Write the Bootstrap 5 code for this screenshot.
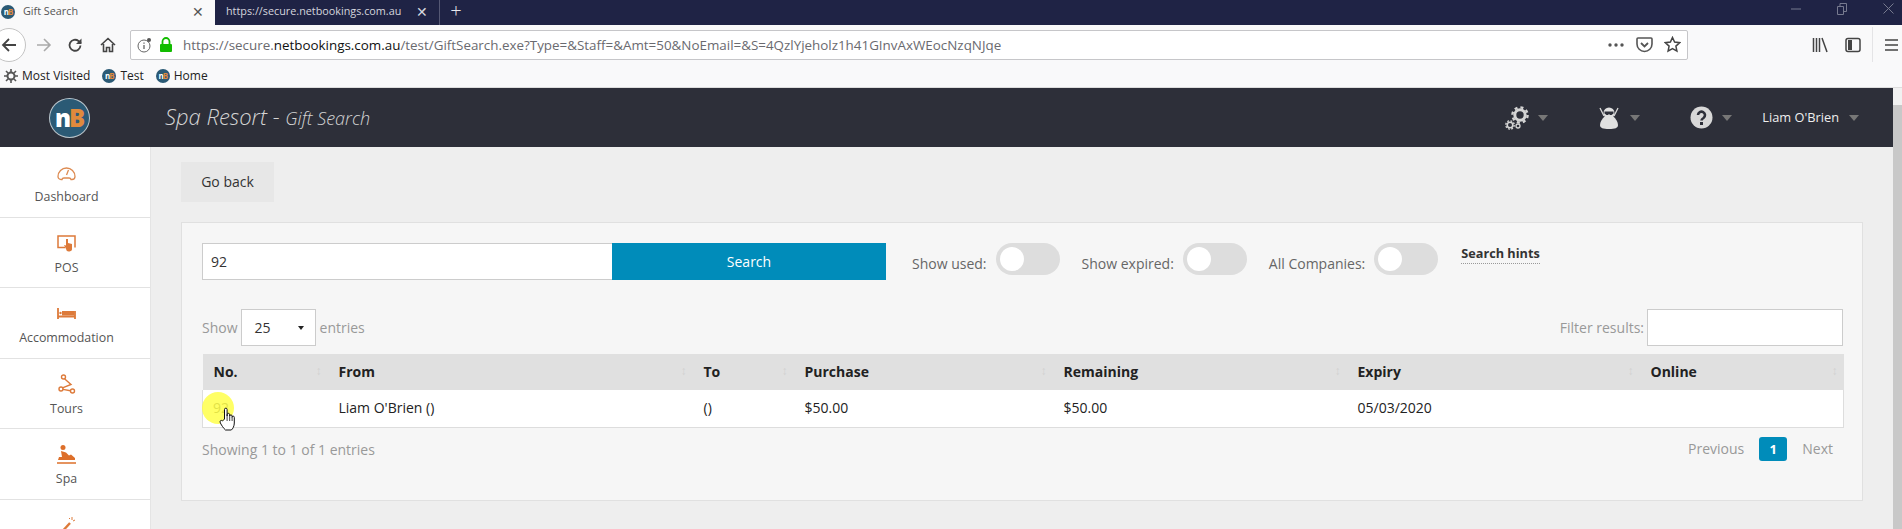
<!DOCTYPE html>
<html lang="en">
<head>
<meta charset="UTF-8">
<title>Gift Search</title>
<link href="https://cdn.jsdelivr.net/npm/bootstrap@5.3.3/dist/css/bootstrap.min.css" rel="stylesheet">
<style>
html, body { height: 529px; overflow: hidden; }
body { font-family: "Open Sans", "Liberation Sans", sans-serif; font-size: 14px; color: #333; background: #eee; position: relative; }

/* browser chrome */
.tabbar { height: 25px; background: #1f2345; color: #d5d6de; font-size: 10.8px; }
.tab-on { width: 215px; background: #f9f9fa; color: #555; padding: 0 11px 2px 1px; }
.tab-off { width: 225px; padding: 0 11px 2px 11px; border-right: 1px solid #555874; white-space: nowrap; overflow: hidden; }
.tab-url { overflow: hidden; }
.tab-x { font-size: 14px; line-height: 1; }
.tab-plus { width: 32px; font-size: 20px; line-height: 1; color: #e8e8ee; text-align: center; font-weight: 300; padding-bottom: 4px; }
.winbtns { margin-left: auto; margin-bottom: 8px; gap: 36px; padding-right: 8px; }
.toolbar { height: 39px; background: #f9f9fa; }
.backbtn { width: 34px; height: 34px; margin-left: -8px; border: 1px solid #c4c4c4; border-radius: 50%; background: #fff; flex: none; }
.tool-ic { flex: none; }
.ic-fwd { margin-left: 10px; }
.ic-reload { margin-left: 15px; }
.ic-home { margin-left: 17px; }
.ic-lib { margin-left: 124px; }
.ic-side { margin-left: 16px; }
.ic-menu { margin-left: 12px; }
.tool-div { width: 1px; height: 35px; margin-left: 11px; background: #e4e4e6; flex: none; }
.urlbox { width: 1558px; height: 30px; margin-left: 14px; flex: none; background: #fff; border: 1px solid #c6c6c9; border-radius: 2px; font-size: 13.4px; color: #6a6a6f; padding: 0 6px; white-space: nowrap; }
.urlbox b { font-weight: 400; color: #111; }
.url-lock { margin-left: 6px; }
.urltext { margin-left: 10px; padding-top: 1px; flex: 1; }
.url-gap { margin-left: 11px; }
.bookbar { height: 24px; background: #f9f9fa; font-size: 12px; color: #222; padding-left: 4px; gap: 12px; border-bottom: 1px solid #ddd; }
.fav { width: 14px; height: 14px; border-radius: 50%; background: #2b5a75; color: #fff; font-size: 8px; font-weight: 700; line-height: 14px; text-align: center; flex: none; margin-right: 4px; letter-spacing: -1px; }
.fav i, .logo-mark i { color: #e08a3c; font-style: normal; }

/* app */
.appwrap { height: 441px; }
.appmain { width: 1893px; flex: none; }
.scrolltrack { width: 9px; background: #c8c8c8; }
.scrolltop { height: 17px; background: #f1f1f1; }
.topnav { height: 59px; background: #2d2f39; color: #d8d8d8; }
.logo-cell { width: 138px; flex: none; }
.logo-mark { width: 41px; height: 40px; border-radius: 50%; background: #2b5a75; border: 1px solid #b9c4cb; color: #fff; font-size: 24px; font-weight: 800; line-height: 37px; text-align: center; letter-spacing: -2px; }
.app-title { margin-left: 27px; margin-bottom: 2px; font-size: 22px; font-style: italic; font-weight: 300; color: #d4d4d4; white-space: nowrap; }
.app-title span { font-size: 18px; }
.nav-right { margin-left: auto; padding-right: 34px; }
.caret-mini { width: 0; height: 0; border-left: 5px solid transparent; border-right: 5px solid transparent; border-top: 6px solid #777; margin-left: 9px; }
.nav-gears { margin-right: 51px; }
.nav-ninja { margin-right: 50px; }
.nav-ninja .caret-mini { margin-left: 11px; }
.nav-help { margin-right: 30px; }
.nav-user { font-size: 12.8px; color: #eee; }
.nav-user .caret-mini { margin-left: 10px; }

.bodyrow { height: 382px; overflow: hidden; }
.sidenav { width: 151px; flex: none; background: #fff; border-right: 1px solid #e4e4e4; }
.side-item { height: 70.6px; padding-right: 17px; padding-top: 15px; border-bottom: 1px solid #e2e2e2; font-size: 12.4px; color: #555; text-align: center; }
.side-ic { height: 20px; margin-bottom: 6px; }
.content-area { padding: 15px 30px 0; flex: 1; min-width: 0; }
.go-back { display: block; width: 93px; height: 40px; padding: 0 0 1px; background: #e7e7e7; border: 0; border-radius: 0; font-size: 14px; color: #333; }
.panel-box { height: 279px; margin-top: 20px; background: #f6f6f6; border: 1px solid #e0e0e0; padding: 20px 19px 20px 20px; }
.search-input { width: 410px; height: 37px; border: 1px solid #ccc; border-right: 0; border-radius: 0; font-size: 14px; color: #333; padding: 0 8px; box-shadow: none; }
.search-btn { width: 274px; height: 37px; padding: 0; background: #008cba; color: #fff; border: 0; border-radius: 0; font-size: 14px; }
.opt-label { color: #666; font-size: 14px; margin-top: 10px; margin-left: 22px; white-space: nowrap; }
.opt-first { margin-left: 26px; }
.switch-pill { width: 64px; height: 32px; margin-left: 9px; background: #ddd; border-radius: 16px; position: relative; flex: none; }
.switch-pill::after { content: ""; position: absolute; left: 4px; top: 4px; width: 24px; height: 24px; border-radius: 50%; background: #fff; }
.hint-link { font-size: 12.7px; font-weight: 700; color: #333; border-bottom: 1px dotted #999; line-height: 19px; margin-left: 23px; margin-top: 1px; }
.grid-top { margin-top: 29px; height: 37px; color: #999; font-size: 14px; }
.len-select { width: 75px; height: 37px; margin: 0 4px 0 3px; padding: 0 0 0 13px; border: 1px solid #ccc; background: #fff; color: #333; font-size: 14px; position: relative; line-height: 35px; }
.len-select::after { content: ""; position: absolute; right: 11px; top: 16px; border-left: 3px solid transparent; border-right: 3px solid transparent; border-top: 4px solid #222; }
.filter-box { width: 196px; height: 37px; margin-left: 3px; border: 1px solid #ccc; background: #fff; }
.gift-table { table-layout: fixed; width: 1641px; margin: 8px 0 0; font-size: 14px; color: #222; }
.gift-table th, .gift-table td { padding: 0 0 1px 11px; vertical-align: middle; border: 0; }
.gift-table th { height: 36px; background: #e0e0e0; font-weight: 700; position: relative; }
.gift-table td { height: 37px; background: #fff; border-bottom: 1px solid #ddd; }
.gift-table td:first-child { border-left: 1px solid #ddd; padding-left: 10px; color: #888; }
.gift-table td:last-child { border-right: 1px solid #ddd; }
.gift-table th::after { content: "\2195"; position: absolute; right: 6px; top: 8px; font-size: 12px; font-weight: 400; color: #d2d2d2; }
.c1 { width: 125px; } .c2 { width: 365px; } .c3 { width: 101px; } .c4 { width: 259px; }
.c5 { width: 294px; } .c6 { width: 293px; } .c7 { width: 204px; }
.grid-foot { color: #999; font-size: 14px; margin-top: 9px; height: 24px; }
.foot-info { padding-top: 2px; }
.page-links { gap: 15px; padding-right: 10px; }
.page-cur { width: 28px; height: 24px; background: #008cba; color: #fff; font-size: 13px; font-weight: 700; text-align: center; line-height: 24px; border-radius: 3px; }

/* screen recorder highlight and pointer */
.click-spot { position: absolute; left: 202px; top: 392px; width: 32px; height: 32px; border-radius: 50%; background: rgba(255, 255, 50, .75); }
.hand-cursor { position: absolute; left: 219px; top: 407px; }
</style>
</head>
<body>

<div class="tabbar d-flex align-items-center">
  <div class="tab-on d-flex align-items-center h-100">
    <div class="fav"><span>n<i>B</i></span></div>
    <span class="ms-1 flex-grow-1">Gift Search</span>
    <span class="tab-x">&#x2715;</span>
  </div>
  <div class="tab-off d-flex align-items-center h-100">
    <span class="tab-url flex-grow-1">https://secure.netbookings.com.au</span>
    <span class="tab-x">&#x2715;</span>
  </div>
  <div class="tab-plus">+</div>
  <div class="winbtns d-flex align-items-center">
    <svg width="10" height="10" viewBox="0 0 10 10"><path d="M0 5h10" stroke="#777a8f" fill="none"/></svg>
    <svg width="10" height="12" viewBox="0 0 10 12"><path d="M.5 3.500h6v8h-6zM3 3V.5h6.500v8H7" stroke="#777a8f" fill="none"/></svg>
    <svg width="11" height="11" viewBox="0 0 11 11"><path d="M.5.5l10 10M10.500.5l-10 10" stroke="#777a8f" fill="none"/></svg>
  </div>
</div>

<div class="toolbar d-flex align-items-center">
  <div class="backbtn d-flex align-items-center justify-content-center">
    <svg width="16" height="16" viewBox="0 0 16 16"><path d="M15 8H2M8 2L2 8l6 6" stroke="#444" stroke-width="1.800" fill="none"/></svg>
  </div>
  <svg class="tool-ic ic-fwd" width="16" height="16" viewBox="0 0 16 16"><path d="M1 8h13M8 2l6 6-6 6" stroke="#aaa" stroke-width="1.600" fill="none"/></svg>
  <svg class="tool-ic ic-reload" width="16" height="16" viewBox="0 0 16 16"><path d="M13.500 8.500A5.500 5.500 0 1 1 11.500 4L14 6" stroke="#444" stroke-width="1.800" fill="none"/><path d="M14.500 1.500v5.500h-5.500z" fill="#444"/></svg>
  <svg class="tool-ic ic-home" width="16" height="16" viewBox="0 0 16 16"><path d="M1 8l7-6.500L15 8M3.500 7v7.500h3v-4h3v4h3V7" stroke="#444" stroke-width="1.600" fill="none"/></svg>
  <div class="urlbox d-flex align-items-center">
    <svg width="16" height="16" viewBox="0 0 16 16"><circle cx="7" cy="9" r="6" stroke="#666" fill="none"/><path d="M7 8v4M7 5.500v1.200" stroke="#666" stroke-width="1.300"/><circle cx="12" cy="3" r="2" fill="#555"/></svg>
    <svg class="url-lock" width="14" height="16" viewBox="0 0 14 16"><path d="M3.500 7V4.500a3.500 3.500 0 0 1 7 0V7" stroke="#12bc00" stroke-width="1.800" fill="none"/><rect x="1" y="7" width="12" height="8" rx="1" fill="#12bc00"/></svg>
    <span class="urltext">https://secure.<b>netbookings.com.au</b>/test/GiftSearch.exe?Type=&amp;Staff=&amp;Amt=50&amp;NoEmail=&amp;S=4QzlYjeholz1h41GInvAxWEocNzqNJqe</span>
    <svg width="18" height="6" viewBox="0 0 18 6"><circle cx="3" cy="3" r="1.700" fill="#555"/><circle cx="9" cy="3" r="1.700" fill="#555"/><circle cx="15" cy="3" r="1.700" fill="#555"/></svg>
    <svg class="url-gap" width="17" height="17" viewBox="0 0 17 17"><path d="M2 2h13a1 1 0 0 1 1 1v5a7.500 7.500 0 0 1-15 0V3a1 1 0 0 1 1-1z" stroke="#555" stroke-width="1.600" fill="none"/><path d="M5 7l3.500 3.500L12 7" stroke="#555" stroke-width="1.800" fill="none"/></svg>
    <svg class="url-gap" width="17" height="17" viewBox="0 0 17 17"><path d="M8.500 1.500l2.100 4.600 5 .6-3.700 3.400 1 5-4.400-2.500-4.400 2.500 1-5L1.400 6.700l5-.6z" stroke="#444" stroke-width="1.500" fill="none"/></svg>
  </div>
  <svg class="tool-ic ic-lib" width="17" height="16" viewBox="0 0 17 16"><path d="M1.500 1v14M4.500 1v14M7.500 1v14M10 1l5 14" stroke="#444" stroke-width="1.500" fill="none"/></svg>
  <svg class="tool-ic ic-side" width="16" height="16" viewBox="0 0 16 16"><rect x="1" y="1.500" width="14" height="13" rx="2" stroke="#444" stroke-width="1.500" fill="none"/><path d="M3 3h4v10H3z" fill="#444"/></svg>
  <div class="tool-div"></div>
  <svg class="tool-ic ic-menu" width="13" height="14" viewBox="0 0 13 14"><path d="M0 2h13M0 7h13M0 12h13" stroke="#444" stroke-width="1.700"/></svg>
</div>

<div class="bookbar d-flex align-items-center">
  <span class="d-flex align-items-center"><svg class="me-1" width="14" height="14" viewBox="0 0 14 14"><circle cx="7" cy="7" r="3.500" stroke="#555" stroke-width="2" fill="none"/><path d="M7 0v3M7 11v3M0 7h3M11 7h3M2 2l2 2M10 10l2 2M12 2l-2 2M4 10l-2 2" stroke="#555" stroke-width="1.600"/></svg>Most Visited</span>
  <span class="d-flex align-items-center"><span class="fav"><span>n<i>B</i></span></span>Test</span>
  <span class="d-flex align-items-center"><span class="fav"><span>n<i>B</i></span></span>Home</span>
</div>

<div class="appwrap d-flex">
  <div class="appmain">
    <div class="topnav d-flex align-items-center">
      <div class="logo-cell d-flex justify-content-center"><div class="logo-mark">n<i>B</i></div></div>
      <div class="app-title">Spa Resort - <span>Gift Search</span></div>
      <div class="nav-right d-flex align-items-center">
        <div class="nav-gears d-flex align-items-center">
          <svg width="24" height="24" viewBox="0 0 24 24" fill="none" stroke="#d4d4d4">
            <circle cx="15" cy="9" r="5.200" stroke-width="3"/>
            <circle cx="15" cy="9" r="7.600" stroke-width="2.400" stroke-dasharray="3 3"/>
            <circle cx="5" cy="19" r="2.800" stroke-width="1.600"/>
            <circle cx="5" cy="19" r="4.200" stroke-width="1.400" stroke-dasharray="1.800 1.500"/>
            <circle cx="13" cy="20" r="2" stroke-width="1.300"/>
          </svg>
          <span class="caret-mini"></span>
        </div>
        <div class="nav-ninja d-flex align-items-center">
          <svg width="20" height="22" viewBox="0 0 20 22"><path d="M1 1l4 8M19 1l-4 8" stroke="#d8d8d8" stroke-width="1.300"/><path d="M6 9c-3 3-5 6-5 9 0 3 3 4 9 4s9-1 9-4c0-3-2-6-5-9z" fill="#e0e0e0"/><circle cx="10" cy="6" r="5.500" fill="#e0e0e0"/><path d="M5.500 4.500h9v2l-2 1.500h-1.500l-1-1-1 1H7.500l-2-1.500z" fill="#2d2f39"/></svg>
          <span class="caret-mini"></span>
        </div>
        <div class="nav-help d-flex align-items-center">
          <svg width="23" height="23" viewBox="0 0 23 23"><circle cx="11.500" cy="11.500" r="11" fill="#d8d8d8"/><path d="M8 9a3.500 3.500 0 1 1 5.500 3c-1.300.8-2 1.300-2 2.500" stroke="#2d2f39" stroke-width="2.600" fill="none"/><rect x="10" y="16" width="3" height="3" fill="#2d2f39"/></svg>
          <span class="caret-mini"></span>
        </div>
        <div class="nav-user d-flex align-items-center">Liam O'Brien<span class="caret-mini"></span></div>
      </div>
    </div>

    <div class="bodyrow d-flex">
      <div class="sidenav">
        <div class="side-item">
          <svg class="side-ic" width="19" height="20" viewBox="0 0 19 20"><path d="M5 17.500H4A3 3 0 0 1 1 14.500 8.500 8.500 0 0 1 18 14.500a3 3 0 0 1-3 3h-1a2 2 0 0 0-2-1.500H7A2 2 0 0 0 5 17.500z" stroke="#dd8b52" stroke-width="1.300" fill="none"/><path d="M9.500 13l2-5" stroke="#dd8b52" stroke-width="1.300"/></svg>
          <div>Dashboard</div>
        </div>
        <div class="side-item">
          <svg class="side-ic" width="19" height="20" viewBox="0 0 19 20"><path d="M8 14.500H1V3h17v11.500" stroke="#dd7a3a" stroke-width="1.500" fill="none"/><path d="M9 6h2v4l4 1v4a3 3 0 0 1-6 1l-2-4 2 .5z" fill="#dd7a3a"/></svg>
          <div>POS</div>
        </div>
        <div class="side-item">
          <svg class="side-ic" width="19" height="20" viewBox="0 0 19 20"><path d="M1 5v11M18 8v8M1 13.500h17" stroke="#dd7a3a" stroke-width="1.800" fill="none"/><path d="M5 8h12.500v4.500H5z" fill="#dd7a3a"/><circle cx="3.500" cy="10" r="1.200" fill="#dd7a3a"/></svg>
          <div>Accommodation</div>
        </div>
        <div class="side-item">
          <svg class="side-ic" width="19" height="20" viewBox="0 0 19 20"><circle cx="6.500" cy="3" r="2" stroke="#dd7a3a" stroke-width="1.400" fill="none"/><circle cx="4" cy="15" r="2" stroke="#dd7a3a" stroke-width="1.400" fill="none"/><circle cx="15.500" cy="17" r="2" stroke="#dd7a3a" stroke-width="1.400" fill="none"/><path d="M7.500 4.700L14 10.500 5.500 13.800M6 15.400l7.500 1.300" stroke="#dd7a3a" stroke-width="1.400" fill="none"/></svg>
          <div>Tours</div>
        </div>
        <div class="side-item">
          <svg class="side-ic" width="19" height="20" viewBox="0 0 19 20"><circle cx="6" cy="3.500" r="2.500" fill="#dd6f2a"/><path d="M4 7l5 1.500 3 3 2-1 4 3.500v2H1l1-3h3z" fill="#dd6f2a"/><path d="M0 19h19" stroke="#dd6f2a" stroke-width="1.500"/></svg>
          <div>Spa</div>
        </div>
        <div class="side-item">
          <svg class="side-ic" width="19" height="20" viewBox="0 0 19 20"><path d="M3 19L13 8" stroke="#dd7a3a" stroke-width="2.400"/><path d="M15 2v3M18 5l-2 1M12 3l1 1" stroke="#dd7a3a"/></svg>
        </div>
      </div>

      <div class="content-area">
        <button type="button" class="btn go-back">Go back</button>
        <div class="panel-box">
          <div class="d-flex align-items-start">
            <input class="form-control search-input" value="92">
            <button type="button" class="btn search-btn">Search</button>
            <span class="opt-label opt-first">Show used:</span>
            <span class="switch-pill"></span>
            <span class="opt-label">Show expired:</span>
            <span class="switch-pill"></span>
            <span class="opt-label">All Companies:</span>
            <span class="switch-pill"></span>
            <span class="hint-link">Search hints</span>
          </div>
          <div class="grid-top d-flex align-items-center">
            <span>Show</span>
            <div class="len-select">25</div>
            <span>entries</span>
            <span class="ms-auto">Filter results:</span>
            <div class="filter-box"></div>
          </div>
          <table class="table gift-table">
            <colgroup><col class="c1"><col class="c2"><col class="c3"><col class="c4"><col class="c5"><col class="c6"><col class="c7"></colgroup>
            <thead>
              <tr><th>No.</th><th>From</th><th>To</th><th>Purchase</th><th>Remaining</th><th>Expiry</th><th>Online</th></tr>
            </thead>
            <tbody>
              <tr><td>92</td><td>Liam O'Brien ()</td><td>()</td><td>$50.00</td><td>$50.00</td><td>05/03/2020</td><td></td></tr>
            </tbody>
          </table>
          <div class="grid-foot d-flex align-items-center">
            <span class="foot-info">Showing 1 to 1 of 1 entries</span>
            <div class="page-links d-flex align-items-center ms-auto">
              <span>Previous</span>
              <span class="page-cur">1</span>
              <span>Next</span>
            </div>
          </div>
        </div>
      </div>
    </div>
  </div>
  <div class="scrolltrack"><div class="scrolltop"></div></div>
</div>

<div class="click-spot"></div>
<svg class="hand-cursor" width="17" height="24" viewBox="0 0 16 24"><path d="M5 12V2.500a1.300 1.300 0 0 1 2.600 0V9l.1-1.500a1.200 1.200 0 0 1 2.400.2L10.200 9a1.200 1.200 0 0 1 2.400.2v1a1.100 1.100 0 0 1 2.200.2V16c0 3-1.500 6-3 7H6c-1.500-1-5-6-5.500-8-.2-1.500 1.500-2.200 2.500-1z" fill="#fff" stroke="#111"/><path d="M7.600 9v5M10.200 9v5M12.600 10v4" stroke="#111" stroke-width=".8"/></svg>

</body>
</html>
